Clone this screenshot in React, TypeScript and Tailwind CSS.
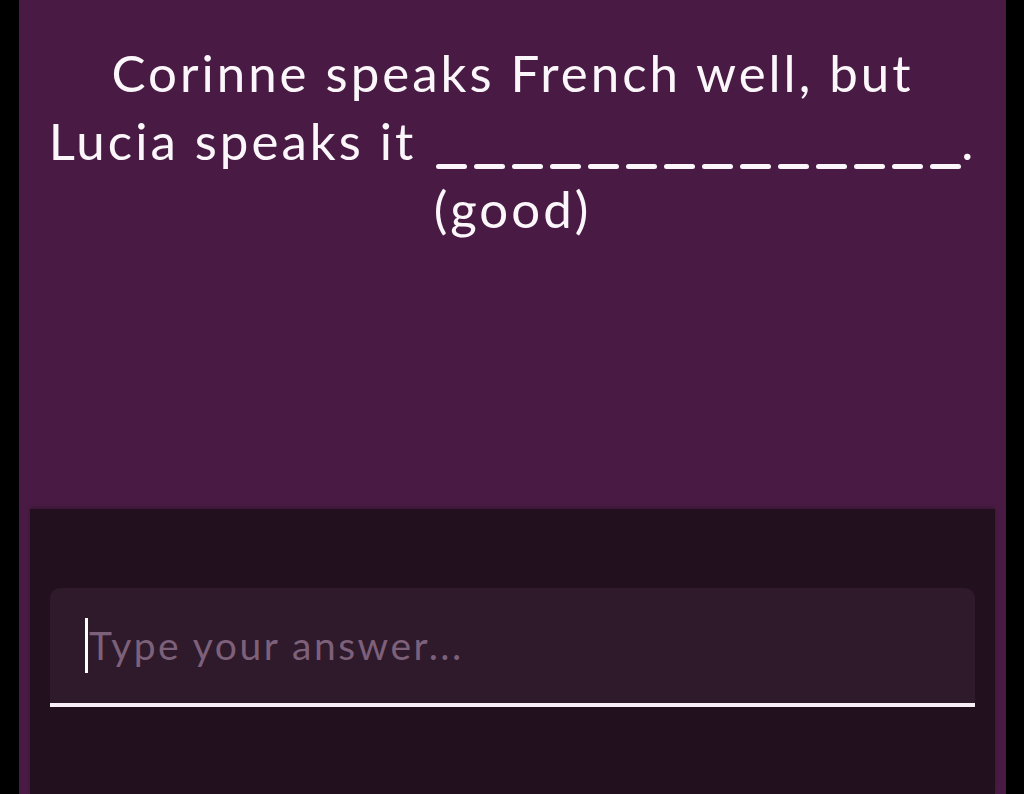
import React from "react";

export default function App() {
  const dashes = Array.from({ length: 14 });
  return (
    <div className="flex h-[794px] w-[1024px] overflow-hidden bg-black pl-[19px] pr-[18px]" style={{ fontFamily: "Lato, 'Noto Sans', sans-serif" }}>
      <div className="flex flex-1 flex-col bg-[#491b44]">
        <div className="flex h-[509px] flex-col items-center pt-[39px] text-center text-[51px] leading-[68px] tracking-[3px] text-[#fbf6fa]">
          <div>Corinne speaks French well, but</div>
          <div className="flex items-baseline">
            <span>Lucia speaks it</span>
            <span className="ml-[20px] inline-flex gap-[7px] self-end pb-[6px]">
              {dashes.map((_, i) => (
                <span key={i} className="block h-[5px] w-[31px] rounded-full bg-[#fbf6fa]" />
              ))}
            </span>
            <span>.</span>
          </div>
          <div>(good)</div>
        </div>
        <div className="mx-[11px] flex-1 bg-[#22101f] px-[20px] pt-[79px] shadow-[0_-2px_4px_rgba(0,0,0,0.2)]">
          <div className="flex h-[119px] items-center rounded-t-[10px] border-b-[4px] border-[#f8eef6] bg-[#2e1a2b] pl-[35px]">
            <span className="mr-[1px] h-[55px] w-[3px] bg-white" />
            <span className="text-[39px] tracking-[2.5px] text-[#7d6079]">Type your answer...</span>
          </div>
        </div>
      </div>
    </div>
  );
}
